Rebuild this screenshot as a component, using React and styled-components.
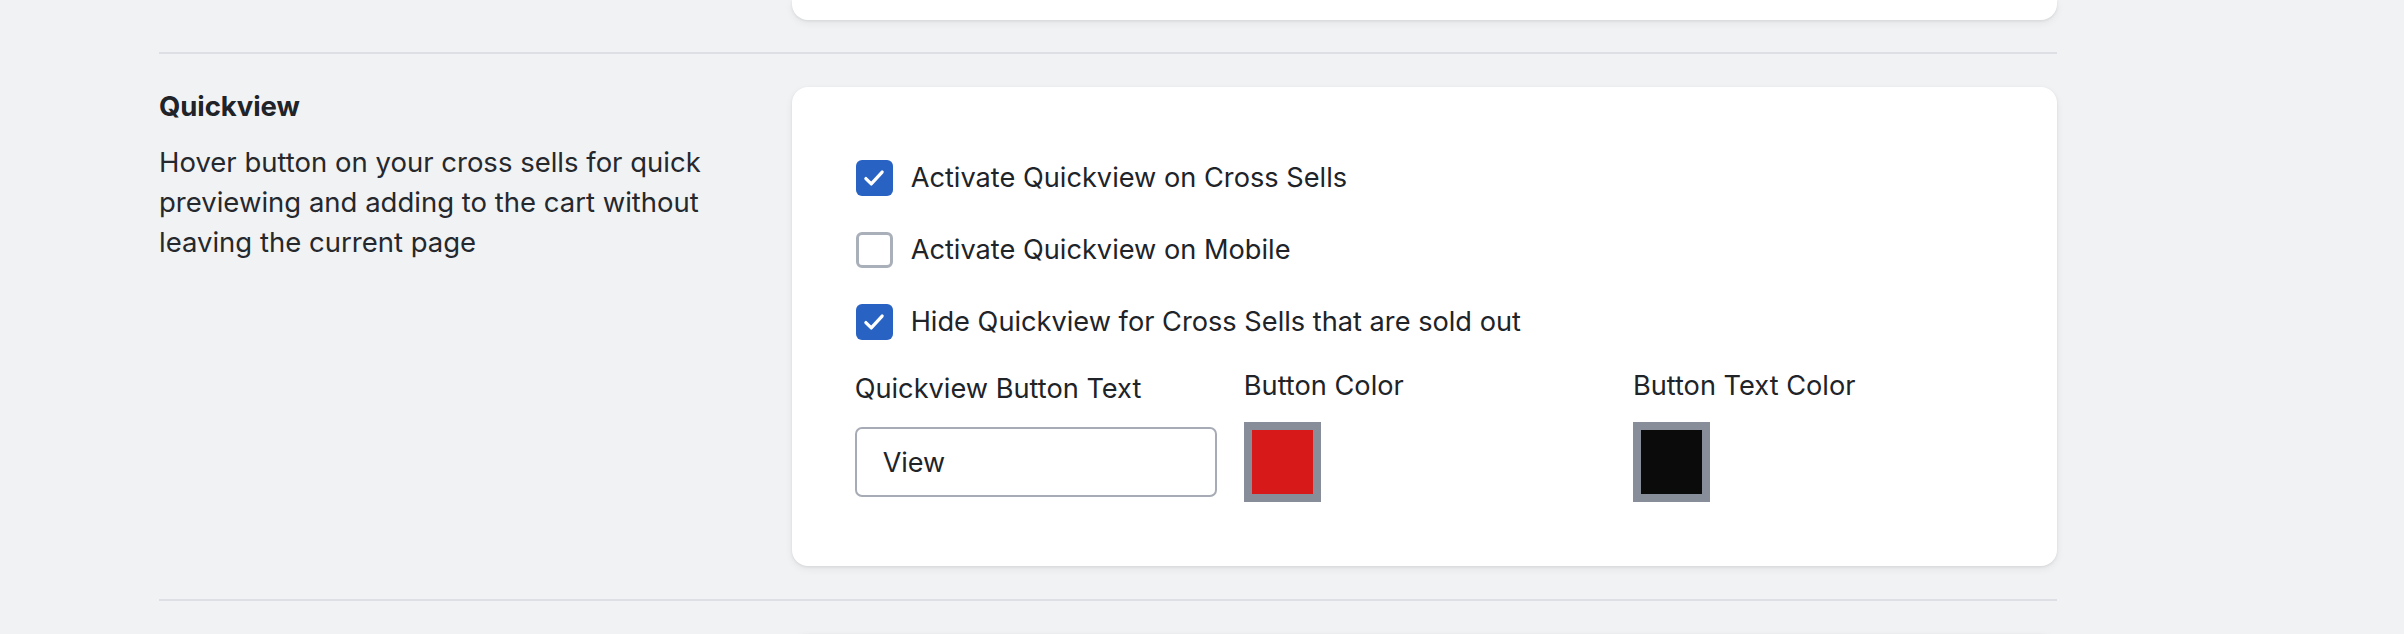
import React, { useState } from "react";
import styled, { createGlobalStyle } from "styled-components";

const GlobalStyle = createGlobalStyle`
  html, body {
    margin: 0;
    padding: 0;
    background: #f1f2f4;
  }
  body {
    font-family: Inter, "Noto Sans", "Liberation Sans", sans-serif;
    color: #202328;
    overflow: hidden;
  }
`;

const Page = styled.div`
  width: 1898px;
  margin-left: 159px;
`;

const Section = styled.section`
  display: grid;
  grid-template-columns: 1fr 2fr;
  padding: ${({ $first }) => ($first ? "0 0 32px" : "33px 0")};
`;

const Divider = styled.hr`
  margin: 0;
  border: none;
  height: 2px;
  background: #dedfe4;
`;

const Info = styled.div`
  padding-right: 62px;
  padding-top: 3px;
`;

const Title = styled.h3`
  margin: 0;
  font-size: 27.5px;
  line-height: 32px;
  font-weight: 700;
  letter-spacing: -0.1px;
`;

const Description = styled.p`
  margin: 20px 0 0;
  font-size: 27.5px;
  line-height: 40px;
  font-weight: 400;
  color: #25282d;
  max-width: 570px;
`;

const Card = styled.div`
  background: #ffffff;
  border-radius: 16px;
  box-shadow: 0 1px 3px rgba(0, 0, 0, 0.08), 0 3px 8px rgba(0, 0, 0, 0.06);
  padding: 73px 62px 64px 63px;
`;

const CardTail = styled.div`
  grid-column: 2;
  height: 20px;
  background: #ffffff;
  border-radius: 0 0 16px 16px;
  box-shadow: 0 1px 3px rgba(0, 0, 0, 0.08), 0 3px 8px rgba(0, 0, 0, 0.06);
`;

const CardHead = styled.div`
  grid-column: 2;
  height: 40px;
  background: #ffffff;
  border-radius: 16px 16px 0 0;
  box-shadow: 0 1px 3px rgba(0, 0, 0, 0.08), 0 3px 8px rgba(0, 0, 0, 0.06);
`;

const Options = styled.div`
  display: flex;
  flex-direction: column;
  gap: 36px;
  padding-left: 1px;
`;

const OptionRow = styled.label`
  display: flex;
  align-items: center;
  gap: 18px;
  min-height: 36px;
  font-size: 27.2px;
  line-height: 36px;
  cursor: pointer;
`;

const Box = styled.span`
  flex: none;
  box-sizing: border-box;
  width: 37px;
  height: 36px;
  border-radius: 6px;
  display: flex;
  align-items: center;
  justify-content: center;
  background: ${({ $checked }) => ($checked ? "#2862c3" : "#ffffff")};
  border: ${({ $checked }) => ($checked ? "none" : "3px solid #aab0ba")};
`;

const Fields = styled.div`
  display: grid;
  grid-template-columns: repeat(3, 1fr);
  column-gap: 27px;
  margin-top: 28px;
`;

const Field = styled.div`
  display: flex;
  flex-direction: column;
  align-items: flex-start;
  gap: ${({ $text }) => ($text ? "20px" : "18px")};
  padding-top: ${({ $text }) => ($text ? "3px" : "0")};
`;

const FieldLabel = styled.span`
  font-size: 27.2px;
  line-height: 36px;
`;

const TextInput = styled.input`
  box-sizing: border-box;
  width: 100%;
  height: 70px;
  border: 2px solid #a6abb5;
  border-radius: 7px;
  padding: 0 26px;
  font-family: inherit;
  font-size: 27px;
  color: #202328;
  background: #ffffff;
  outline: none;
`;

const Swatch = styled.span`
  display: block;
  box-sizing: border-box;
  width: 77px;
  height: 80px;
  border: 8px solid #878e99;
  background: ${({ $color }) => $color};
`;

const Check = () => (
  <svg width="26" height="26" viewBox="0 0 24 24" fill="none">
    <path
      d="M4.5 12.5l5 5 10-11"
      stroke="#ffffff"
      strokeWidth="3"
      strokeLinecap="round"
      strokeLinejoin="round"
    />
  </svg>
);

const options = [
  { id: "cross", label: "Activate Quickview on Cross Sells", checked: true },
  { id: "mobile", label: "Activate Quickview on Mobile", checked: false },
  { id: "soldout", label: "Hide Quickview for Cross Sells that are sold out", checked: true },
];

const App = () => {
  const [values, setValues] = useState(
    Object.fromEntries(options.map((o) => [o.id, o.checked]))
  );
  const [text, setText] = useState("View");

  const toggle = (id) => setValues((prev) => ({ ...prev, [id]: !prev[id] }));

  return (
    <>
      <GlobalStyle />
      <Page>
        <Section $first>
          <CardTail />
        </Section>
        <Divider />
        <Section>
          <Info>
            <Title>Quickview</Title>
            <Description>
              Hover button on your cross sells for quick previewing and adding
              to the cart without leaving the current page
            </Description>
          </Info>
          <Card>
            <Options>
              {options.map((o) => (
                <OptionRow key={o.id} onClick={() => toggle(o.id)}>
                  <Box $checked={values[o.id]}>{values[o.id] && <Check />}</Box>
                  {o.label}
                </OptionRow>
              ))}
            </Options>
            <Fields>
              <Field $text>
                <FieldLabel>Quickview Button Text</FieldLabel>
                <TextInput value={text} onChange={(e) => setText(e.target.value)} />
              </Field>
              <Field>
                <FieldLabel>Button Color</FieldLabel>
                <Swatch $color="#d7191a" />
              </Field>
              <Field>
                <FieldLabel>Button Text Color</FieldLabel>
                <Swatch $color="#0b0b0b" />
              </Field>
            </Fields>
          </Card>
        </Section>
        <Divider />
        <Section>
          <CardHead />
        </Section>
      </Page>
    </>
  );
};

export default App;
